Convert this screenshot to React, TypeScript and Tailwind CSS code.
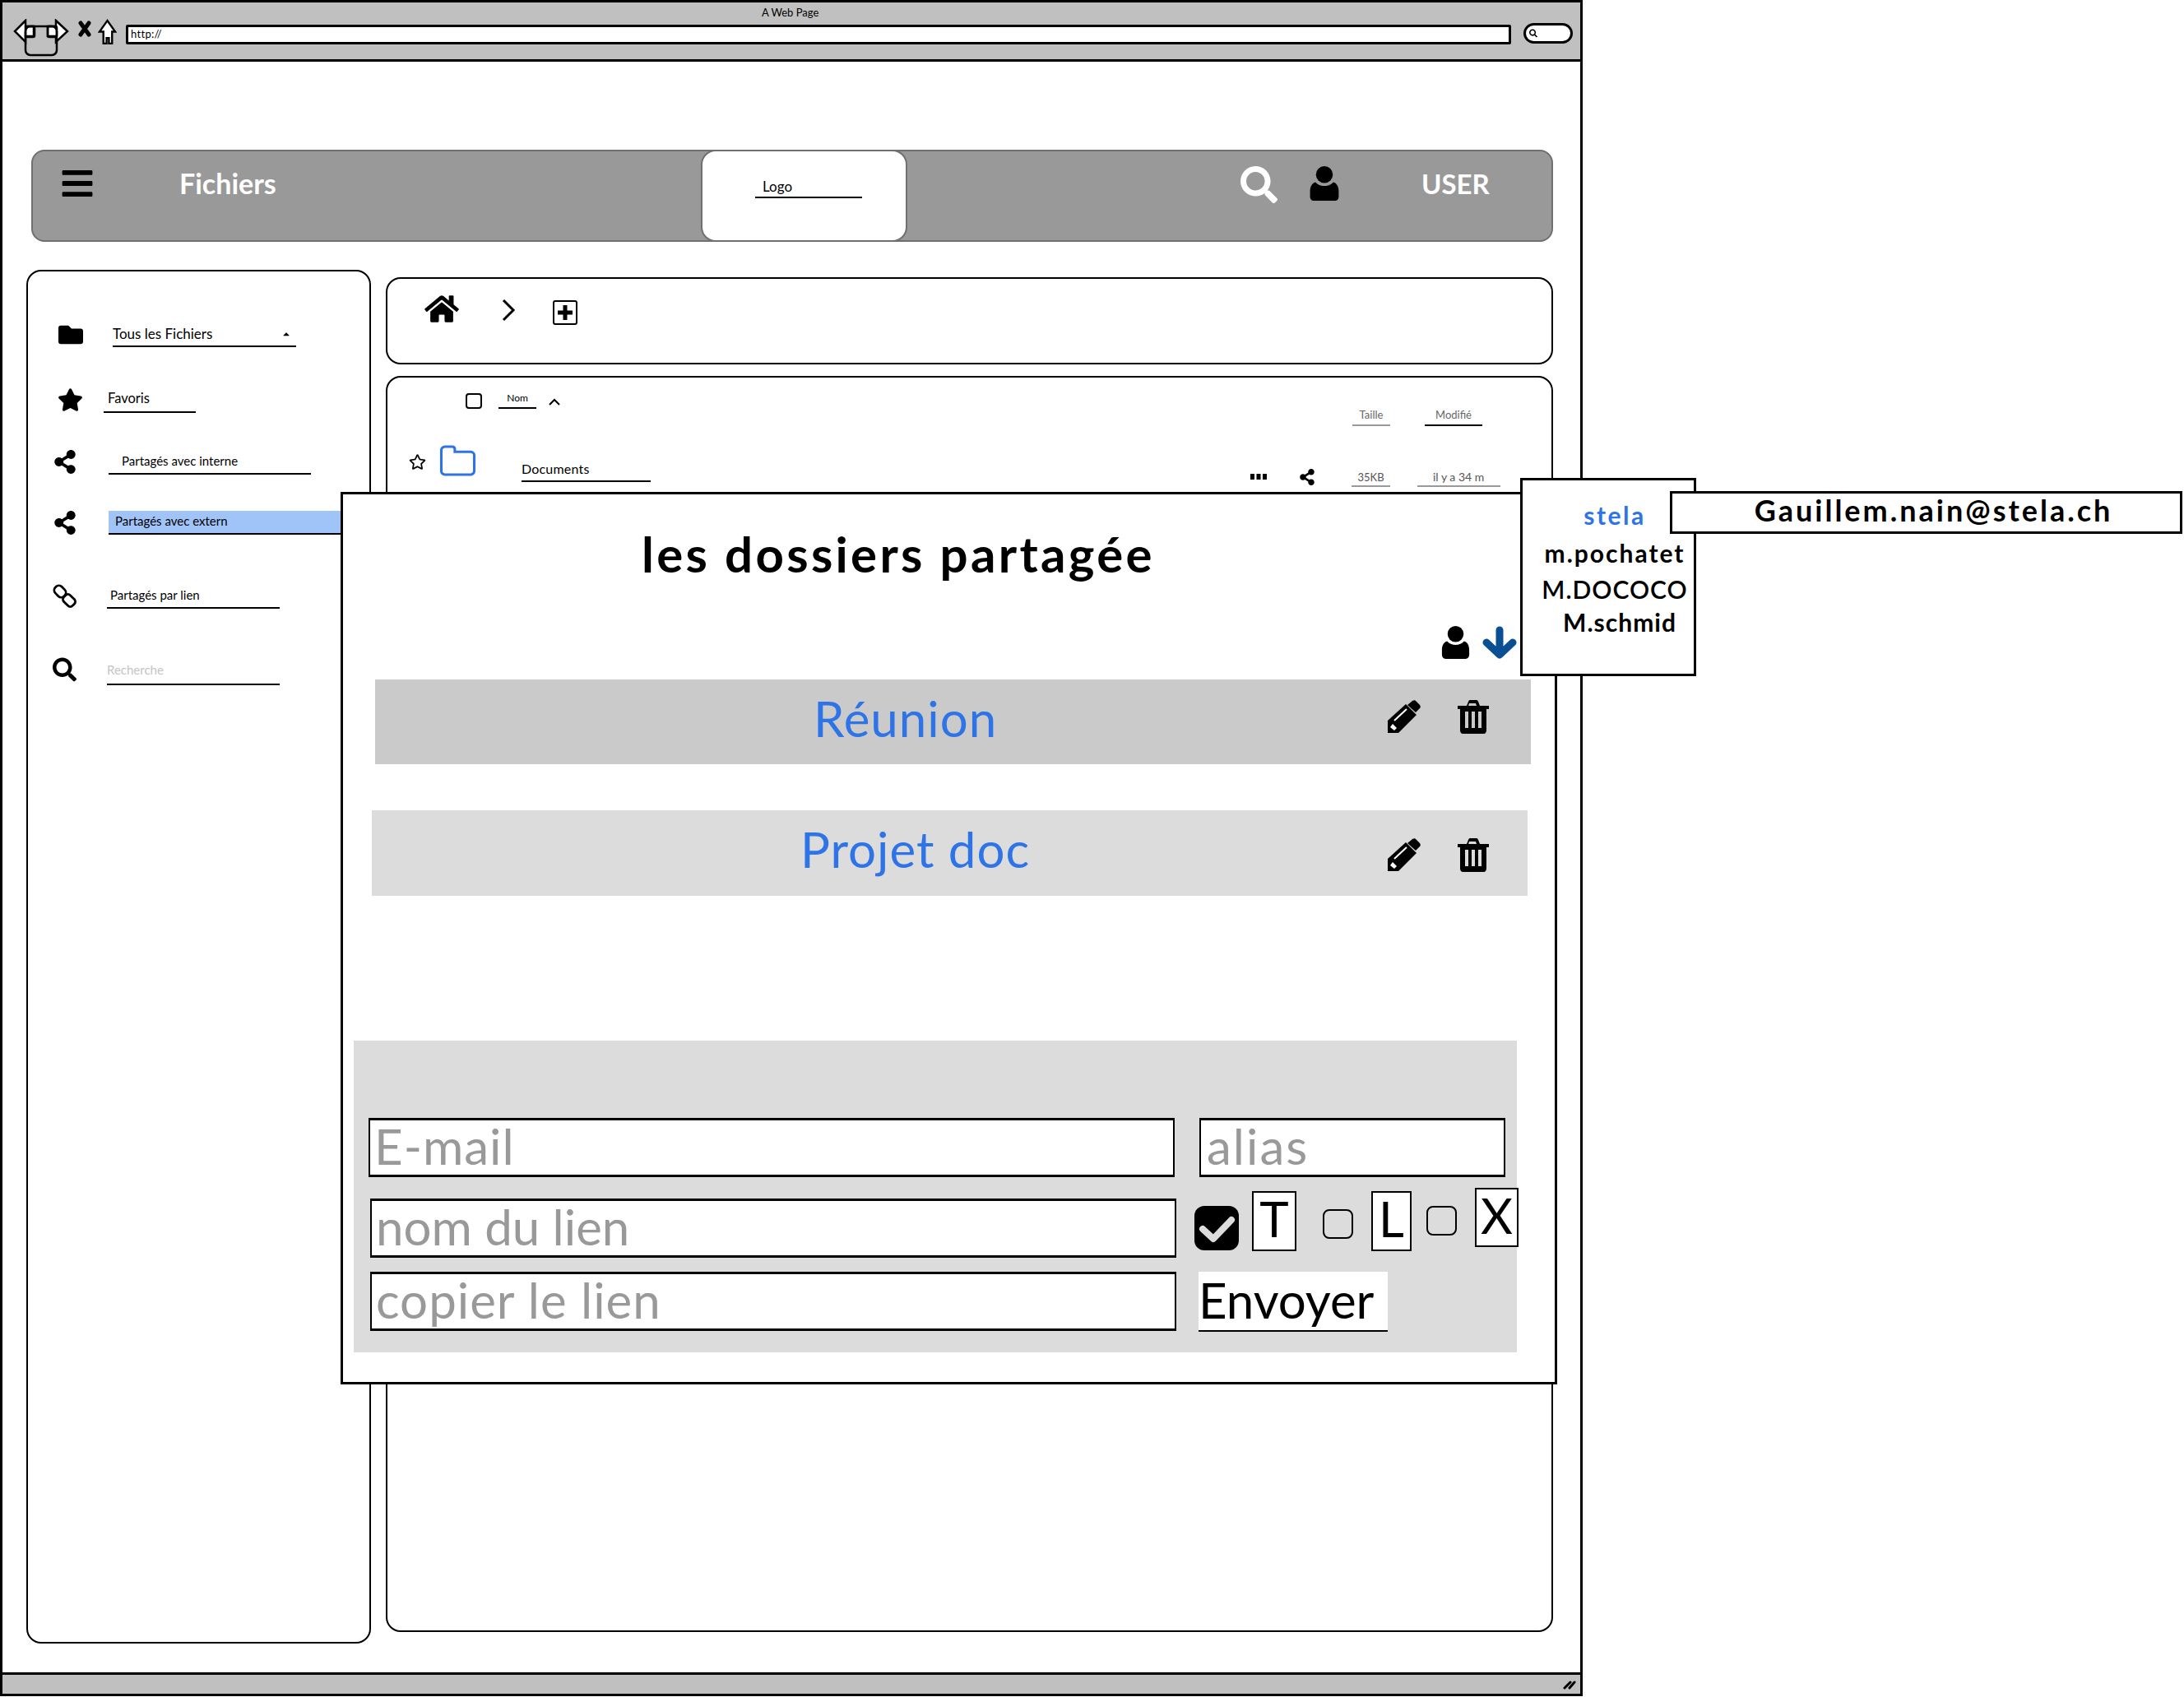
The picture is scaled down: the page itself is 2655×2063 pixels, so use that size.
import {
  FaBars,
  FaCaretUp,
  FaFolder,
  FaHome,
  FaRegStar,
  FaSearch,
  FaShareAlt,
  FaStar,
} from 'react-icons/fa';

const UserIcon = ({ className }: { className: string }) => (
  <svg viewBox="0 0 35 41" className={className} fill="currentColor">
    <circle cx="17.5" cy="10" r="10" />
    <path d="M7 19c3 3.500 7 4.500 10.500 4.500S25 22.500 28 19c4 1 6.500 5 6.500 11v6c0 3-2 5-4.500 5H5c-2.500 0-4.500-2-4.500-5v-6C.5 24 3 20 7 19z" />
  </svg>
);

const PencilIcon = ({ className }: { className: string }) => (
  <svg viewBox="0 0 41 40" className={className}>
    <path d="M24 6l6-5c2-1 3-1 4 0l5 5c1 2 1 3 0 4l-5 5z" />
    <path d="M0 25 22 5l13 13-22 22H0z" />
    <path d="M8 25 23 11" stroke="#fff" strokeWidth="2" />
    <path d="M3 33l3-4 5 5-3 3z" fill="#fff" />
  </svg>
);

const TrashIcon = ({ className }: { className: string }) => (
  <svg viewBox="0 0 38 41" className={className}>
    <path d="M0 7h38v4H0z" />
    <path d="M11 7l2-5c.5-1.300 1-2 2-2h8c1 0 1.500.7 2 2l2 5h-4l-1-3h-8l-1 3z" />
    <path
      fillRule="evenodd"
      d="M3 11h32v26c0 2-1.500 4-3 4H6c-1.500 0-3-2-3-4z M9 14v20h4V14z M17 14v20h4V14z M25 14v20h4V14z"
    />
  </svg>
);

const LinkIcon = () => (
  <svg viewBox="0 0 29 29" className="w-[29px] h-[29px]" fill="none" stroke="#000" strokeWidth="2.800">
    <rect x="1.500" y="3.500" width="15" height="11" rx="5" transform="rotate(45 9 9)" />
    <rect x="12.500" y="14.500" width="15" height="11" rx="4" transform="rotate(45 20 20)" />
  </svg>
);

const CheckedBox = () => (
  <svg viewBox="0 0 54 54" className="ml-[22px] mt-[22px] w-[54px] h-[54px] shrink-0">
    <rect width="54" height="54" rx="12" />
    <path d="M10 28l13 12 22-23" fill="none" stroke="#dcdcdc" strokeWidth="8" strokeLinejoin="round" strokeLinecap="round" />
  </svg>
);

const NavArrows = () => (
  <svg viewBox="0 0 68 46" className="w-[68px] h-[46px] ml-[13px] mt-[20px]" fill="none" stroke="#000" strokeWidth="2.500">
    <path d="M15 2 2 15l13 13v-7h10V9H15z" fill="#fff" />
    <path d="M52 2l14 13-14 13v-7H42V9h10z" fill="#fff" />
    <rect x="15" y="9" width="38" height="35" rx="6" />
    <rect x="15" y="9" width="11" height="13" rx="2" />
    <rect x="42" y="9" width="11" height="13" rx="2" />
  </svg>
);

const HomeOutline = () => (
  <svg viewBox="0 0 24 34" className="w-[23px] h-[33px] ml-[8px] mt-[20px]" fill="#fff" stroke="#000" strokeWidth="2.500">
    <path d="M12 2 2 16h5v15h4v-7h3v7h4V16h4z" />
  </svg>
);

const BrowserTop = () => (
  <div className="h-[72px] shrink-0 bg-[#c0c0c0] border-b-[3px] border-black relative">
    <p className="absolute top-[4px] left-[923px] text-[13px] leading-4">A Web Page</p>
    <div className="flex items-start">
      <NavArrows />
      <svg viewBox="0 0 16 20" className="ml-[11px] mt-[22px] w-[16px] h-[20px]" stroke="#000" strokeWidth="5" strokeLinecap="round">
        <path d="M3 3l10 14M13 3 3 17" />
      </svg>
      <HomeOutline />
      <div className="ml-[11px] mt-[27px] w-[1684px] h-[24px] bg-white border-[3px] border-black rounded-[2px] text-[13px] leading-[17px] tracking-[.3px] pl-[3px]">
        http://
      </div>
      <div className="ml-[15px] mt-[25px] w-[60px] h-[25px] bg-white border-[3px] border-black rounded-full flex items-center pl-[4px]">
        <FaSearch className="w-[10px] h-[11px]" />
      </div>
    </div>
  </div>
);

const Header = () => (
  <header className="ml-[35px] mt-[107px] w-[1850px] h-[112px] shrink-0 bg-[#999999] border-[2px] border-[#707070] rounded-[16px] flex items-start text-white">
    <FaBars className="ml-[33px] mt-[18px] w-[42px] h-[42px] text-black" />
    <span className="ml-[103px] mt-[21px] w-[120px] shrink-0 text-[34px] leading-9 font-bold whitespace-nowrap">Fichiers</span>
    <div className="ml-[514px] -mt-[2px] w-[251px] h-[112px] shrink-0 bg-white border-[2px] border-[#707070] rounded-[18px] text-black">
      <div className="ml-[64px] mt-[33px] w-[130px] h-[24px] border-b-[2px] border-black pl-[9px] text-[17px] leading-[20px]">
        Logo
      </div>
    </div>
    <FaSearch className="ml-[405px] mt-[18px] w-[45px] h-[45px]" />
    <UserIcon className="ml-[39px] mt-[18px] w-[36px] h-[42px] text-black" />
    <span className="ml-[100px] mt-[21px] text-[33px] leading-9 font-bold">USER</span>
  </header>
);

const navItems = [
  {
    label: 'Tous les Fichiers',
    icon: <FaFolder className="w-[30px] h-[30px] -mt-[2px]" />,
    row: 'mt-[64px] h-[28px] pl-[37px]',
    iconBox: 'w-[30px]',
    text: 'ml-[36px] w-[223px] text-[17px] border-black',
    caret: true,
  },
  {
    label: 'Favoris',
    icon: <FaStar className="w-[31px] h-[30px]" />,
    row: 'mt-[49px] h-[31px] pl-[36px]',
    iconBox: 'w-[31px]',
    text: 'ml-[25px] w-[112px] pl-[5px] text-[16.500px] border-black',
  },
  {
    label: 'Partagés avec interne',
    icon: <FaShareAlt className="w-[28px] h-[29px]" />,
    row: 'mt-[45px] h-[30px] pl-[31px]',
    iconBox: 'w-[28px]',
    text: 'ml-[39px] w-[246px] pl-[16px] text-[15px] border-black',
  },
  {
    label: 'Partagés avec extern',
    icon: <FaShareAlt className="w-[28px] h-[29px]" />,
    row: 'mt-[44px] h-[29px] pl-[31px]',
    iconBox: 'w-[28px]',
    text: 'ml-[39px] w-[300px] pl-[8px] text-[15px] bg-[#a0c4f7] border-black',
  },
  {
    label: 'Partagés par lien',
    icon: <LinkIcon />,
    row: 'mt-[60px] h-[30px] pl-[30px]',
    iconBox: 'w-[29px]',
    text: 'ml-[37px] w-[210px] pl-[4px] text-[15px] border-black',
  },
  {
    label: 'Recherche',
    icon: <FaSearch className="w-[29px] h-[30px]" />,
    row: 'mt-[59px] h-[34px] pl-[30px]',
    iconBox: 'w-[29px]',
    text: 'ml-[37px] w-[210px] text-[15px] text-[#c4c4c4] border-black',
  },
];

const Sidebar = () => (
  <aside className="ml-[29px] w-[419px] h-[1670px] shrink-0 bg-white border-[2px] border-black rounded-[18px]">
    {navItems.map((item) => (
      <div key={item.label} className={`flex items-start ${item.row}`}>
        <div className={`shrink-0 ${item.iconBox}`}>{item.icon}</div>
        <div className={`shrink-0 h-full border-b-[2px] leading-[24px] pb-[3px] whitespace-nowrap flex items-center justify-between pr-[6px] ${item.text}`}>
          <span>{item.label}</span>
          {item.caret && <FaCaretUp className="w-[12px] h-[12px]" />}
        </div>
      </div>
    ))}
  </aside>
);

const Breadcrumb = () => (
  <div className="mt-[9px] h-[106px] bg-white border-[2px] border-black rounded-[18px] flex items-start">
    <FaHome className="ml-[44px] mt-[18px] w-[44px] h-[37px]" />
    <svg viewBox="0 0 18 28" className="ml-[50px] mt-[24px] w-[18px] h-[28px]" fill="none" stroke="#000" strokeWidth="3">
      <path d="M3 2l12 12L3 26" />
    </svg>
    <div className="ml-[45px] mt-[26px] w-[30px] h-[30px] border-[2px] border-black rounded-[3px] flex items-center justify-center">
      <svg viewBox="0 0 18 18" className="w-[18px] h-[18px]">
        <path d="M6.500 0h5v6.500H18v5h-6.500V18h-5v-6.500H0v-5h6.500z" />
      </svg>
    </div>
  </div>
);

const FileList = () => (
  <div className="mt-[14px] h-[1527px] bg-white border-[2px] border-black rounded-[18px] text-[15px]">
    <div className="flex items-start mt-[19px] h-[48px]">
      <div className="ml-[95px] w-[20px] h-[19px] border-[2px] border-black rounded-[4px]" />
      <div className="ml-[20px] w-[46px] h-[19px] border-b-[2px] border-black text-[12px] leading-[12px] text-center">Nom</div>
      <svg viewBox="0 0 14 9" className="ml-[15px] mt-[6px] w-[14px] h-[9px]" fill="none" stroke="#000" strokeWidth="2">
        <path d="M1 8l6-6 6 6" />
      </svg>
      <div className="ml-[963px] mt-[20px] w-[46px] h-[20px] border-b-[2px] border-[#999] text-[13px] leading-[13px] text-center text-[#666]">Taille</div>
      <div className="ml-[42px] mt-[20px] w-[70px] h-[20px] border-b-[2px] border-black text-[13px] leading-[13px] text-center text-[#666]">Modifié</div>
    </div>
    <div className="flex items-start mt-[17px]">
      <FaRegStar className="ml-[26px] mt-[8px] w-[21px] h-[21px]" />
      <svg viewBox="0 0 43 37" className="ml-[16px] w-[45px] h-[38px] -mt-[2px] shrink-0" fill="none" stroke="#2e74e6" strokeWidth="3">
        <path d="M2 6c0-2 2-4 4-4h9c2 0 3 1 3 3v3h19c2 0 4 2 4 4v19c0 2-2 4-4 4H6c-2 0-4-2-4-4z" />
      </svg>
      <div className="ml-[55px] mt-[19px] w-[157px] h-[24px] border-b-[2px] border-black text-[16px] leading-[16px] tracking-[.2px]">Documents</div>
      <svg viewBox="0 0 20 7" className="ml-[729px] mt-[33px] w-[20px] h-[7px]">
        <path d="M0 0h5v7H0zM7.500 0h5v7h-5zM15 0h5v7h-5z" />
      </svg>
      <FaShareAlt className="ml-[38px] mt-[27px] w-[22px] h-[20px]" />
      <div className="ml-[43px] mt-[27px] w-[47px] h-[22px] border-b-[2px] border-[#999] text-[13px] leading-[20px] text-center text-[#555]">35KB</div>
      <div className="ml-[33px] mt-[27px] w-[101px] h-[22px] border-b-[2px] border-[#999] text-[14px] leading-[20px] pl-[19px] text-[#555] whitespace-nowrap">il y a 34 m</div>
    </div>
  </div>
);

const FolderRow = ({ name, row, textBox, icons }: { name: string; row: string; textBox: string; icons: string }) => (
  <div className={`flex items-start ${row}`}>
    <span className={`shrink-0 text-[60px] leading-[94px] tracking-[1px] text-[#2e74e6] whitespace-nowrap ${textBox}`}>{name}</span>
    <PencilIcon className={`w-[41px] h-[40px] ${icons}`} />
    <TrashIcon className={`ml-[44px] w-[38px] h-[41px] ${icons}`} />
  </div>
);

const TextField = ({ placeholder, className }: { placeholder: string; className: string }) => (
  <div className={`shrink-0 bg-white border-y-[3px] border-x-[2px] border-black text-[60px] leading-[62px] pl-[5px] text-[#999999] whitespace-nowrap ${className}`}>
    {placeholder}
  </div>
);

const LetterBox = ({ letter, className }: { letter: string; className: string }) => (
  <div className={`shrink-0 bg-white border-[2px] border-black flex justify-center text-[60px] leading-[62px] ${className}`}>
    {letter}
  </div>
);

const ShareForm = () => (
  <div className="ml-[13px] mt-[176px] w-[1414px] h-[379px] bg-[#dcdcdc] pt-[94px]">
    <div className="flex items-start">
      <TextField placeholder="E-mail" className="ml-[18px] w-[980px] h-[72px] tracking-[1px]" />
      <TextField placeholder="alias" className="ml-[30px] w-[372px] h-[72px] tracking-[2px] pl-[7px]" />
    </div>
    <div className="flex items-start mt-[13px] h-[85px]">
      <TextField placeholder="nom du lien" className="ml-[20px] mt-[13px] w-[980px] h-[72px]" />
      <CheckedBox />
      <LetterBox letter="T" className="ml-[16px] mt-[4px] w-[54px] h-[73px]" />
      <div className="ml-[32px] mt-[26px] w-[37px] h-[36px] border-[2px] border-black rounded-[8px] shrink-0" />
      <LetterBox letter="L" className="ml-[22px] mt-[4px] w-[49px] h-[73px]" />
      <div className="ml-[18px] mt-[22px] w-[37px] h-[36px] border-[2px] border-black rounded-[8px] shrink-0" />
      <LetterBox letter="X" className="ml-[22px] w-[53px] h-[72px]" />
    </div>
    <div className="flex items-start mt-[17px]">
      <TextField placeholder="copier le lien" className="ml-[20px] w-[980px] h-[72px] tracking-[1px]" />
      <div className="ml-[27px] w-[230px] h-[73px] bg-white border-b-[2px] border-black text-[60px] leading-[68px] whitespace-nowrap">
        Envoyer
      </div>
    </div>
  </div>
);

const SharedFoldersModal = () => (
  <div className="absolute left-[414px] top-[598px] w-[1479px] h-[1085px] bg-white border-[3px] border-black">
    <h1 className="ml-[363px] mt-[37px] text-[60px] leading-[70px] font-bold tracking-[3.300px] whitespace-nowrap">les dossiers partagée</h1>
    <div className="flex items-start ml-[1335px] mt-[53px] h-[40px]">
      <UserIcon className="w-[35px] h-[40px]" />
      <svg viewBox="0 0 42 40" className="ml-[15px] w-[42px] h-[40px]" fill="none" stroke="#0b4f93" strokeWidth="9" strokeLinecap="round" strokeLinejoin="round">
        <path d="M21 5v29M5 20l16 15 16-15" />
      </svg>
    </div>
    <FolderRow name="Réunion" row="ml-[39px] mt-[25px] w-[1405px] h-[103px] bg-[#cacaca] pl-[533px]" textBox="w-[698px]" icons="mt-[25px]" />
    <FolderRow name="Projet doc" row="ml-[35px] mt-[56px] w-[1405px] h-[104px] bg-[#dcdcdc] pl-[521px]" textBox="w-[714px]" icons="mt-[34px]" />
    <ShareForm />
  </div>
);

const ContactMenu = () => (
  <>
    <div className="absolute left-[1848px] top-[581px] w-[214px] h-[241px] bg-white border-[3px] border-black flex flex-col items-center pl-[16px] pt-[24px] text-[30px] font-bold">
      <span className="leading-[36px] text-[#2e74e6] tracking-[2.500px]">stela</span>
      <span className="mt-[10px] leading-[36px] tracking-[2px]">m.pochatet</span>
      <span className="mt-[8px] leading-[36px] font-semibold tracking-[1px]">M.DOCOCO</span>
      <span className="mt-[4px] ml-[12px] leading-[36px] tracking-[1px]">M.schmid</span>
    </div>
    <div className="absolute left-[2030px] top-[597px] w-[623px] h-[52px] bg-white border-[3px] border-black flex justify-center text-[36px] leading-[40px] font-bold tracking-[3px] whitespace-nowrap pl-[18px]">
      Gauillem.nain@stela.ch
    </div>
  </>
);

const BrowserBottom = () => (
  <div className="mt-auto h-[26px] shrink-0 bg-[#c0c0c0] border-t-[3px] border-black flex justify-end items-center pr-[5px]">
    <svg viewBox="0 0 16 12" className="w-[16px] h-[12px]" stroke="#000" strokeWidth="3" strokeLinecap="round">
      <path d="M2 10 9 3M8 10l6-7" />
    </svg>
  </div>
);

export default function App() {
  return (
    <div className="relative w-[2655px] h-[2063px] overflow-hidden bg-white text-black font-['Lato',sans-serif]">
      <div className="w-[1924px] h-[2062px] border-[3px] border-black flex flex-col">
        <BrowserTop />
        <Header />
        <div className="flex items-start mt-[34px]">
          <Sidebar />
          <div className="ml-[18px] w-[1419px] shrink-0">
            <Breadcrumb />
            <FileList />
          </div>
        </div>
        <BrowserBottom />
      </div>
      <SharedFoldersModal />
      <ContactMenu />
    </div>
  );
}
